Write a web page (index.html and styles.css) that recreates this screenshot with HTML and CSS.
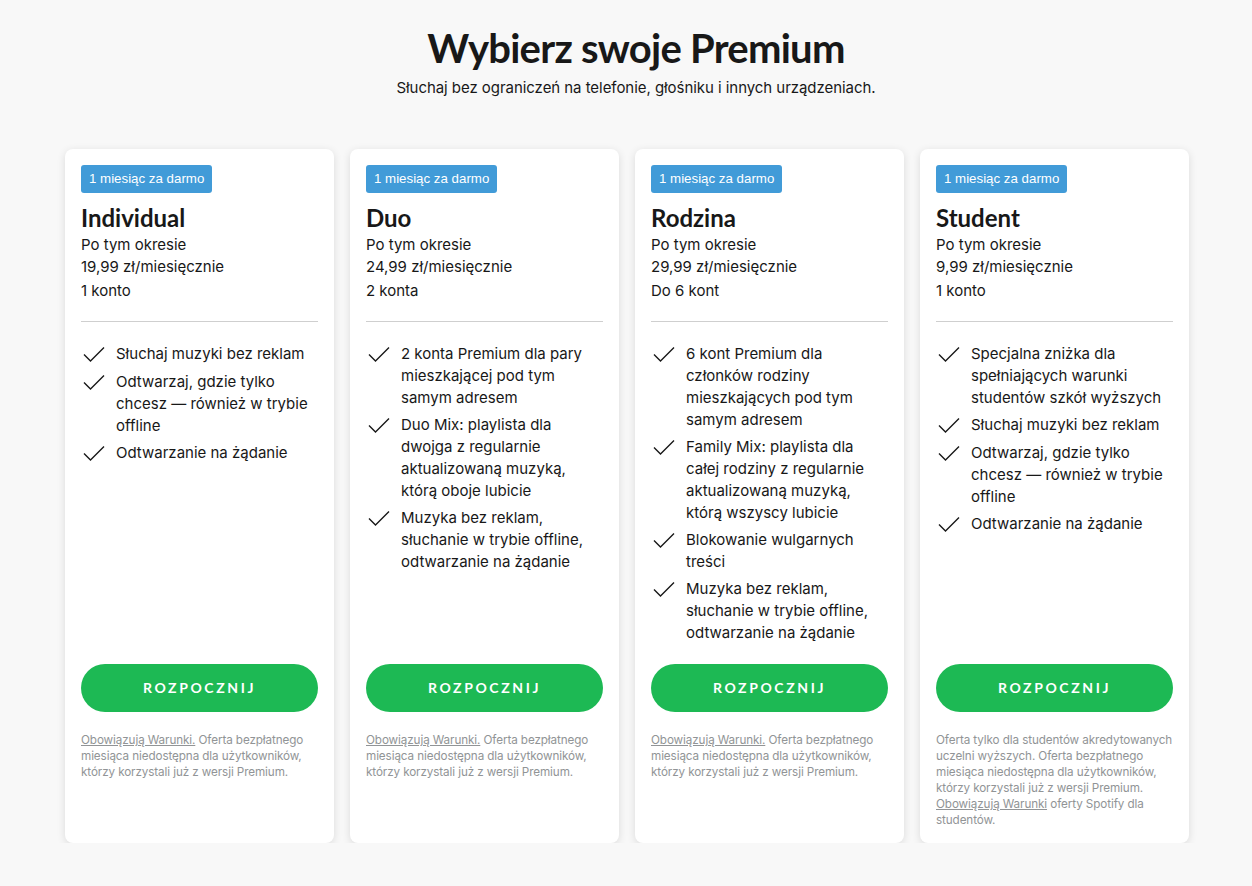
FILE: index.html
```html
<!DOCTYPE html>
<html lang="pl">
<head>
    <meta charset="UTF-8">
    <meta name="viewport" content="width=device-width, initial-scale=1.0">
    <title>Wybierz swoje Premium</title>
    <link rel="stylesheet" href="styles.css">
</head>
<body>
    <div class="page">
        <div class="head">
            <h1 class="title">Wybierz swoje Premium</h1>
            <p class="subtitle">Słuchaj bez ograniczeń na telefonie, głośniku i innych urządzeniach.</p>
        </div>

        <div class="plans">
            <div class="card">
                <span class="badge">1 miesiąc za darmo</span>
                <h3 class="name">Individual</h3>
                <p class="price">Po tym okresie<br>19,99 zł/miesięcznie</p>
                <p class="accounts">1 konto</p>
                <hr>
                <ul class="features">
                    <li><svg viewBox="0 0 24 24"><path d="M3 12.5l6.5 6.5L23 5.5"/></svg><span>Słuchaj muzyki bez reklam</span></li>
                    <li><svg viewBox="0 0 24 24"><path d="M3 12.5l6.5 6.5L23 5.5"/></svg><span>Odtwarzaj, gdzie tylko chcesz — również w trybie offline</span></li>
                    <li><svg viewBox="0 0 24 24"><path d="M3 12.5l6.5 6.5L23 5.5"/></svg><span>Odtwarzanie na żądanie</span></li>
                </ul>
                <a class="btn" href="#">Rozpocznij</a>
                <p class="terms"><a href="#">Obowiązują Warunki.</a> Oferta bezpłatnego miesiąca niedostępna dla użytkowników, którzy korzystali już z wersji Premium.</p>
            </div>

            <div class="card">
                <span class="badge">1 miesiąc za darmo</span>
                <h3 class="name">Duo</h3>
                <p class="price">Po tym okresie<br>24,99 zł/miesięcznie</p>
                <p class="accounts">2 konta</p>
                <hr>
                <ul class="features">
                    <li><svg viewBox="0 0 24 24"><path d="M3 12.5l6.5 6.5L23 5.5"/></svg><span>2 konta Premium dla pary mieszkającej pod tym samym adresem</span></li>
                    <li><svg viewBox="0 0 24 24"><path d="M3 12.5l6.5 6.5L23 5.5"/></svg><span>Duo Mix: playlista dla dwojga z regularnie aktualizowaną muzyką, którą oboje lubicie</span></li>
                    <li><svg viewBox="0 0 24 24"><path d="M3 12.5l6.5 6.5L23 5.5"/></svg><span>Muzyka bez reklam, słuchanie w trybie offline, odtwarzanie na żądanie</span></li>
                </ul>
                <a class="btn" href="#">Rozpocznij</a>
                <p class="terms"><a href="#">Obowiązują Warunki.</a> Oferta bezpłatnego miesiąca niedostępna dla użytkowników, którzy korzystali już z wersji Premium.</p>
            </div>

            <div class="card">
                <span class="badge">1 miesiąc za darmo</span>
                <h3 class="name">Rodzina</h3>
                <p class="price">Po tym okresie<br>29,99 zł/miesięcznie</p>
                <p class="accounts">Do 6 kont</p>
                <hr>
                <ul class="features">
                    <li><svg viewBox="0 0 24 24"><path d="M3 12.5l6.5 6.5L23 5.5"/></svg><span>6 kont Premium dla członków rodziny mieszkających pod tym samym adresem</span></li>
                    <li><svg viewBox="0 0 24 24"><path d="M3 12.5l6.5 6.5L23 5.5"/></svg><span>Family Mix: playlista dla całej rodziny z regularnie aktualizowaną muzyką, którą wszyscy lubicie</span></li>
                    <li><svg viewBox="0 0 24 24"><path d="M3 12.5l6.5 6.5L23 5.5"/></svg><span>Blokowanie wulgarnych treści</span></li>
                    <li><svg viewBox="0 0 24 24"><path d="M3 12.5l6.5 6.5L23 5.5"/></svg><span>Muzyka bez reklam, słuchanie w trybie offline, odtwarzanie na żądanie</span></li>
                </ul>
                <a class="btn" href="#">Rozpocznij</a>
                <p class="terms"><a href="#">Obowiązują Warunki.</a> Oferta bezpłatnego miesiąca niedostępna dla użytkowników, którzy korzystali już z wersji Premium.</p>
            </div>

            <div class="card">
                <span class="badge">1 miesiąc za darmo</span>
                <h3 class="name">Student</h3>
                <p class="price">Po tym okresie<br>9,99 zł/miesięcznie</p>
                <p class="accounts">1 konto</p>
                <hr>
                <ul class="features">
                    <li><svg viewBox="0 0 24 24"><path d="M3 12.5l6.5 6.5L23 5.5"/></svg><span>Specjalna zniżka dla spełniających warunki studentów szkół wyższych</span></li>
                    <li><svg viewBox="0 0 24 24"><path d="M3 12.5l6.5 6.5L23 5.5"/></svg><span>Słuchaj muzyki bez reklam</span></li>
                    <li><svg viewBox="0 0 24 24"><path d="M3 12.5l6.5 6.5L23 5.5"/></svg><span>Odtwarzaj, gdzie tylko chcesz — również w trybie offline</span></li>
                    <li><svg viewBox="0 0 24 24"><path d="M3 12.5l6.5 6.5L23 5.5"/></svg><span>Odtwarzanie na żądanie</span></li>
                </ul>
                <a class="btn" href="#">Rozpocznij</a>
                <p class="terms">Oferta tylko dla studentów akredytowanych uczelni wyższych. Oferta bezpłatnego miesiąca niedostępna dla użytkowników, którzy korzystali już z wersji Premium. <a href="#">Obowiązują Warunki</a> oferty Spotify dla studentów.</p>
            </div>
        </div>
    </div>
</body>
</html>
```

FILE: styles.css
```css
*{
    padding: 0;
    margin: 0;
    box-sizing: border-box;
}
body{
    background: #f8f8f8;
    color: #181818;
    font-family: Inter, "Liberation Sans", sans-serif;
}
.page{
    width: 1124px;
    margin-left: calc(50% - 561px);
    padding-top: 24px;
}
.head{
    padding-left: 18px;
    text-align: center;
}
.title{
    font-family: Lato, sans-serif;
    font-size: 40px;
    line-height: 48px;
    font-weight: 700;
    letter-spacing: -0.75px;
}
.subtitle{
    font-size: 15px;
    line-height: 22px;
    letter-spacing: -0.05px;
    margin-top: 5px;
}
.plans{
    display: grid;
    grid-template-columns: repeat(4, 1fr);
    gap: 16px;
    margin-top: 50px;
}
.card{
    display: flex;
    flex-direction: column;
    align-items: flex-start;
    background: #fff;
    border-radius: 8px;
    box-shadow: 0 2px 8px rgba(0,0,0,.12);
    padding: 16px 16px 15px;
}
.badge{
    display: inline-block;
    height: 28px;
    line-height: 28px;
    padding: 0 8px;
    border-radius: 3px;
    background: #419bd8;
    color: #fff;
    font-family: "Liberation Sans", Arial, sans-serif;
    font-size: 13.3px;
}
.name{
    font-family: Lato, sans-serif;
    font-size: 24px;
    line-height: 32px;
    font-weight: 700;
    margin-top: 9px;
}
.price{
    font-size: 15px;
    line-height: 22px;
}
.accounts{
    font-size: 15px;
    line-height: 22px;
    margin-top: 2px;
}
.card hr{
    width: 100%;
    border: 0;
    border-top: 1px solid #cfcfcf;
    margin-top: 19px;
}
.features{
    list-style: none;
    flex: 1;
    padding: 21px 0 20px;
}
.features li{
    display: flex;
    gap: 11px;
    font-size: 15px;
    line-height: 22px;
    margin-bottom: 5px;
}
.features li:last-child{
    margin-bottom: 0;
}
.features svg{
    flex: none;
    width: 24px;
    height: 24px;
    margin-top: -1px;
    fill: none;
    stroke: #181818;
    stroke-width: 1.4;
}
.btn{
    display: block;
    width: 100%;
    height: 48px;
    line-height: 48px;
    border-radius: 24px;
    background: #1db954;
    color: #fff;
    text-align: center;
    text-decoration: none;
    text-transform: uppercase;
    font-family: Lato, sans-serif;
    font-size: 14px;
    font-weight: 700;
    letter-spacing: 2.6px;
}
.terms{
    min-height: 96px;
    margin-top: 20px;
    font-size: 11.7px;
    line-height: 16px;
    letter-spacing: -0.1px;
    color: #919496;
}
.terms a{
    color: #919496;
    text-decoration: underline;
}
```
